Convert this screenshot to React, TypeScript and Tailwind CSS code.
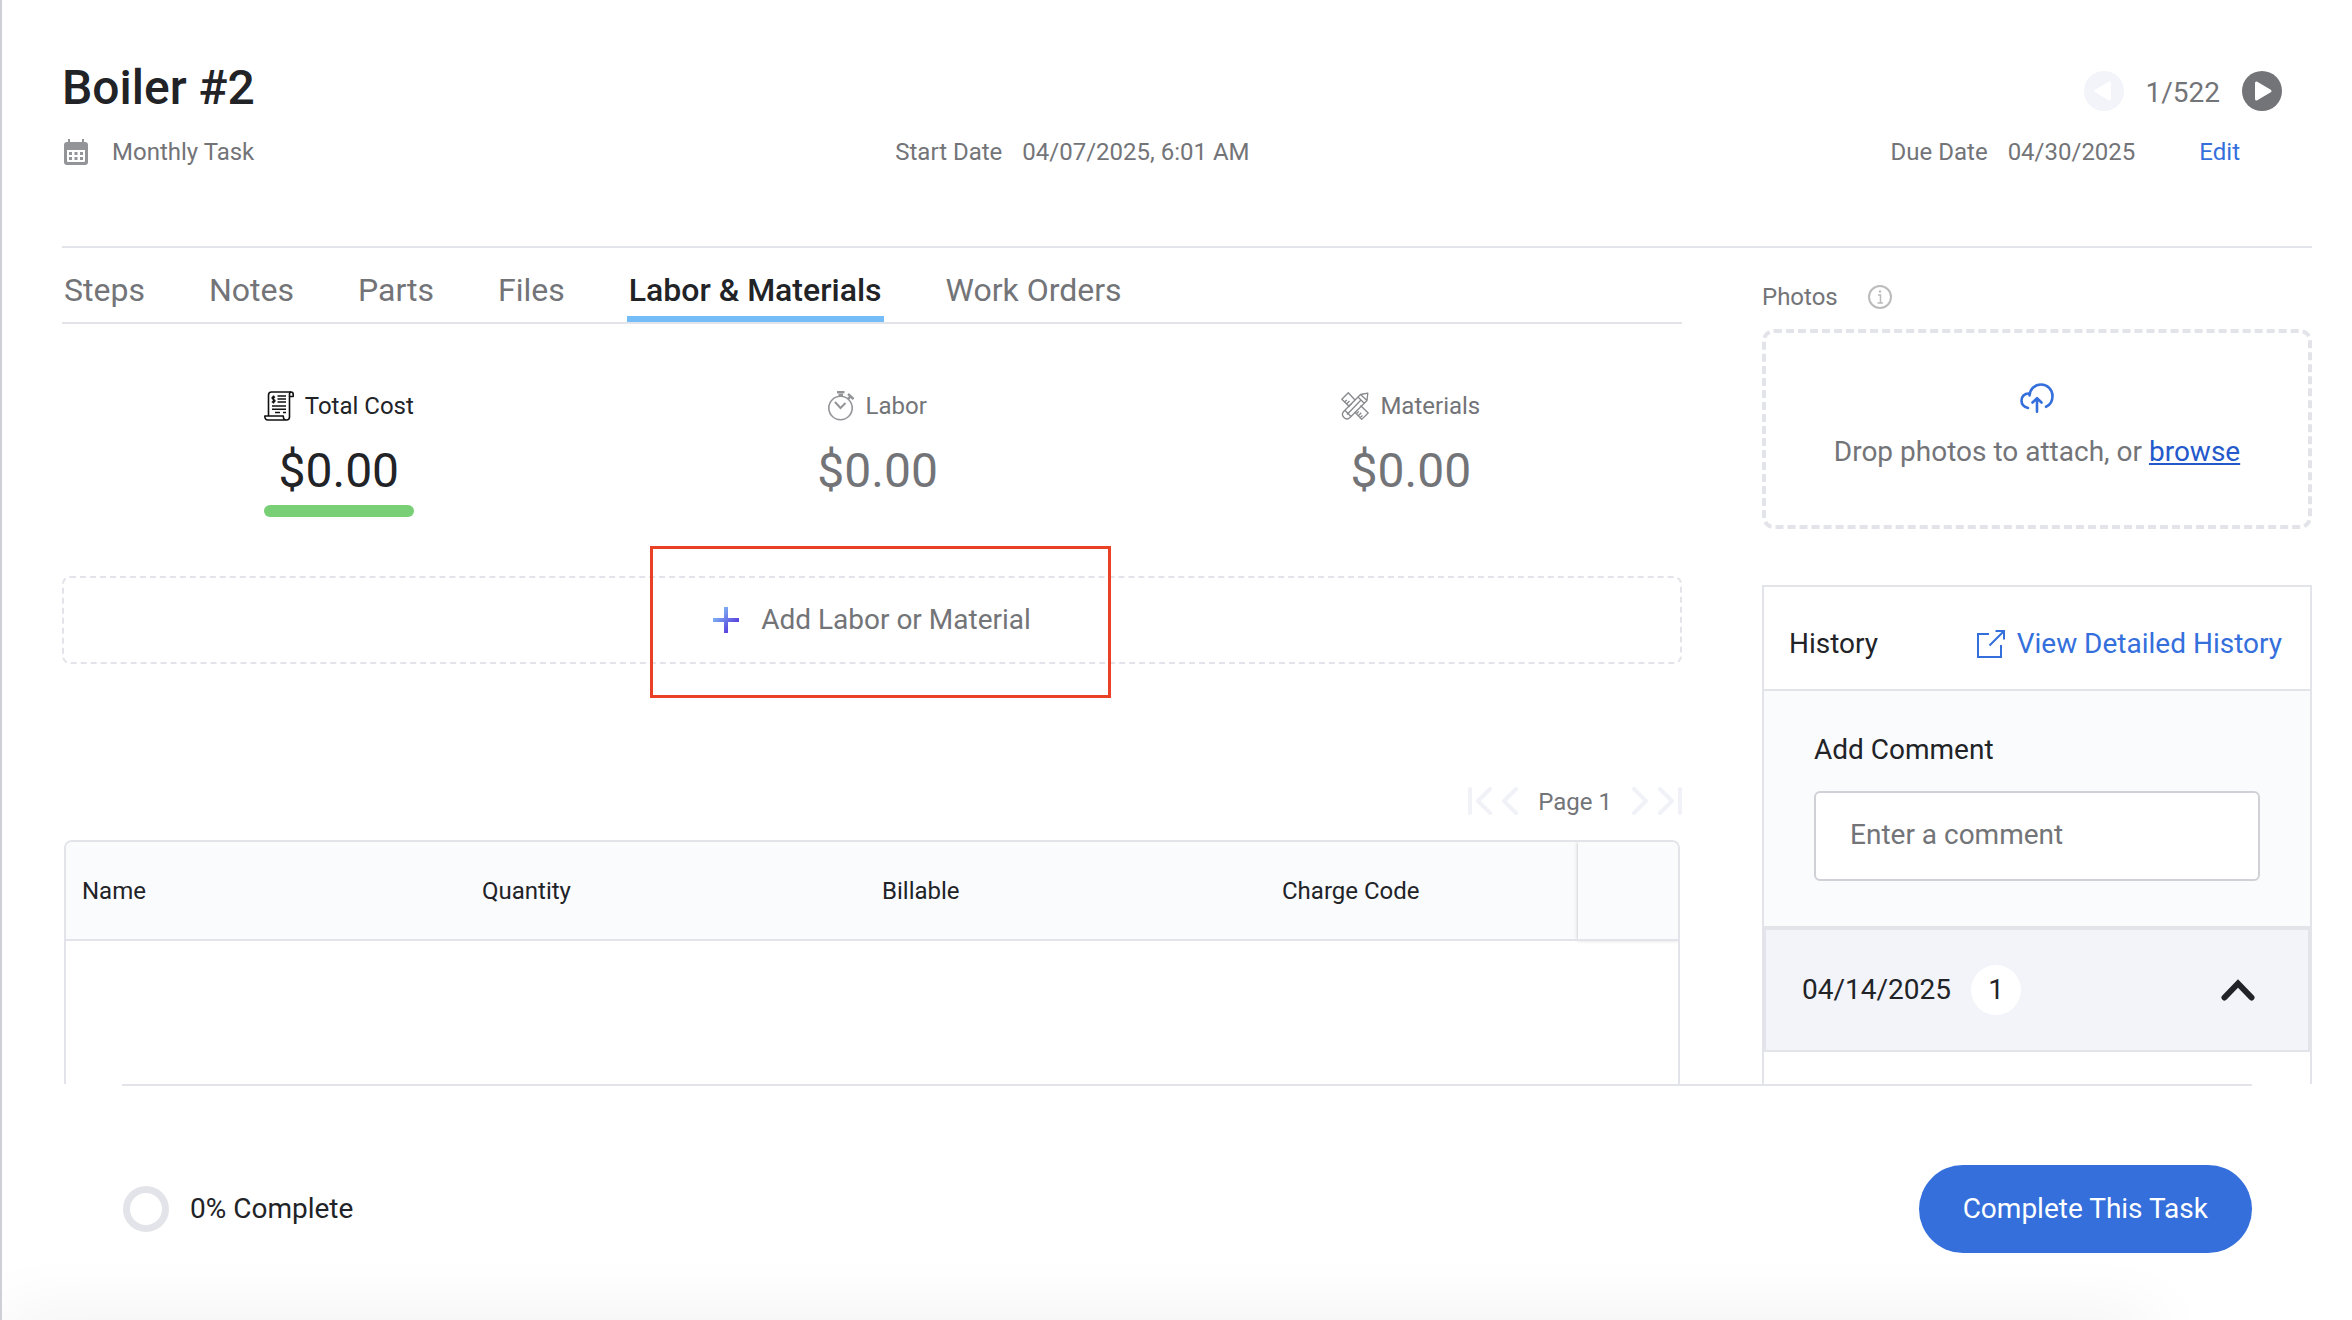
import React, { useState } from 'react'

const TABS = ['Steps', 'Notes', 'Parts', 'Files', 'Labor & Materials', 'Work Orders']

function CalendarIcon() {
  return (
    <svg className="h-[26px] w-6" viewBox="0 0 24 26" fill="none">
      <path
        fillRule="evenodd"
        fill="#939498"
        d="M4 0h2v3h12V0h2v3h1a3 3 0 0 1 3 3v17a3 3 0 0 1-3 3H3a3 3 0 0 1-3-3V6a3 3 0 0 1 3-3h1zM3 11v11a1 1 0 0 0 1 1h16a1 1 0 0 0 1-1V11z"
      />
      <path
        fill="#939498"
        d="M5 13h3v3H5zM10.500 13h3v3h-3zM16 13h3v3h-3zM5 18h3v3H5zM10.500 18h3v3h-3zM16 18h3v3h-3z"
      />
    </svg>
  )
}

function PlayIcon({ flip, color }: { flip?: boolean; color: string }) {
  return (
    <svg className="size-10" viewBox="0 0 40 40">
      <circle cx="20" cy="20" r="20" fill={color} />
      <path
        d={flip ? 'M25.500 12v16L12 20z' : 'M14.500 12v16L28 20z'}
        fill="#fff"
        stroke="#fff"
        strokeWidth="3"
        strokeLinejoin="round"
      />
    </svg>
  )
}

function ReceiptIcon() {
  return (
    <svg className="size-[30px]" viewBox="0 0 30 30" fill="none" stroke="#111" strokeWidth="1.600" strokeLinejoin="round">
      <path d="M4.500 24.500V4C4.500 2 5.500 1 7.500 1H27c1.500 0 2.200 1.200 2.200 2.500V5.500h-3.700V26c0 2-1 3-3 3H4c-2 0-3.200-1.500-3.200-4h18.500c0 2.500 1 4 3 4" />
      <path d="M25.500 5.500V3.500C25.500 2 26 1 27 1" />
      <path d="M13.500 5h8.500M13.500 8h8.500M13.500 11h8.500M8 15h14M8 18.300h14M11 21.500h5M19 21.500h3" />
      <path strokeWidth="1.400" d="M11 6.300C9.200 5.300 8 6 8.100 7.200c.2 1.400 2.900 1 2.900 2.600 0 1.400-1.800 1.700-3.200.8M9.500 4.500v8" />
    </svg>
  )
}

function StopwatchIcon() {
  return (
    <svg className="h-[30px] w-[26px]" viewBox="0 0 26 30" fill="none" stroke="#939498" strokeWidth="1.600">
      <circle cx="12.500" cy="17" r="11.700" />
      <path d="M9 1.200h7.500" strokeWidth="2.400" />
      <path d="M10.500 3.800h4.500" strokeWidth="2.400" />
      <path d="M20 3l5.500 5" strokeWidth="2.400" />
      <path d="M23 5l-3 3" strokeWidth="2.400" />
      <path d="M7 11l5.500 6 5-5" strokeWidth="2" />
    </svg>
  )
}

function RulerPencilIcon() {
  return (
    <svg className="size-7" viewBox="0 0 28 28" fill="none" stroke="#87888c" strokeWidth="1.300" strokeLinejoin="round">
      <path d="M8.500 14.800L.8 7.300 7.300.8l6.900 7.400M19.500 13.500l7.700 7.500-6.500 6.400-7-7.400" />
      <path d="M3.500 10l2.300-2M5.500 12l3-3M8 14l2.300-2M15.500 21.500l2.300-2M17.300 23.700l3-3M19.200 25.500l2.300-2" />
      <path d="M19.500 2.500L26.800 1.200l-.8 7.300L9 25.500c-4 4-10-2-6.300-6zM19.500 2.500l6.500 6M17 5l6 6M20 8L6 22.500M3.800 18.300l6 6" />
    </svg>
  )
}

function PlusIcon() {
  return (
    <svg className="size-[26px]" viewBox="0 0 26 26">
      <defs>
        <linearGradient id="plus" x1="0" y1="0" x2="26" y2="26" gradientUnits="userSpaceOnUse">
          <stop offset=".2" stopColor="#7fb6f2" />
          <stop offset=".75" stopColor="#5b45e0" />
        </linearGradient>
      </defs>
      <path d="M11 0h4v11h11v4H15v11h-4V15H0v-4h11z" fill="url(#plus)" />
    </svg>
  )
}

function CloudIcon() {
  return (
    <svg className="h-[30px] w-[34px]" viewBox="0 0 34 30" fill="none" stroke="#346fdc" strokeWidth="2.600" strokeLinecap="round" strokeLinejoin="round">
      <path d="M8 25C4 24 1.500 21.500 1.500 17.500c0-4 3-7 7-7h1.500" />
      <path d="M9.500 12.500C10 6 15 1.500 21 1.500c6.500 0 11.500 5 11.500 11.500 0 5-2.500 9-6.500 10.800" />
      <path d="M17 28.700V16M12.500 19.500L17 15.200l4.500 4.300" />
    </svg>
  )
}

function ExternalIcon() {
  return (
    <svg className="size-7" viewBox="0 0 28 28" fill="none" stroke="#346fdc" strokeWidth="2">
      <path d="M12 4H1v23h23V15" />
      <path d="M12.500 15.500L26.500 1.500M18.500 1H27v8.500" />
    </svg>
  )
}

function PagerIcon({ d, wide }: { d: string; wide?: boolean }) {
  return (
    <svg
      className={wide ? 'h-7 w-6' : 'h-7 w-4'}
      viewBox={wide ? '0 0 24 28' : '0 0 16 28'}
      fill="none"
      stroke="#f1f2f7"
      strokeWidth="4"
      strokeLinecap="round"
      strokeLinejoin="round"
    >
      <path d={d} />
    </svg>
  )
}

interface StatProps {
  icon: React.ReactNode
  label: string
  active?: boolean
}

function Stat({ icon, label, active }: StatProps) {
  return (
    <button className={active ? 'flex flex-col items-center text-[#212327]' : 'flex flex-col items-center text-[#737478]'}>
      <span className="flex h-8 items-center gap-[11px] text-2xl">
        {icon}
        {label}
      </span>
      <span className="mt-[17px] text-5xl leading-16">$0.00</span>
      {active && <span className="mt-0.5 h-3 w-full rounded-full bg-[#79cf76]" />}
    </button>
  )
}

export default function App() {
  const [tab, setTab] = useState('Labor & Materials')
  const [comment, setComment] = useState('')

  return (
    <div className="relative flex h-screen flex-col overflow-hidden border-l-2 border-[#cfcfd7] bg-white font-['Roboto',sans-serif] text-[#212327]">
      {/* Header */}
      <header className="mr-10 ml-[60px] border-b-2 border-[#e3e4e9] pt-15 pb-[78px]">
        <div className="flex h-14 items-center justify-between">
          <h1 className="text-5xl font-medium">Boiler #2</h1>
          <div className="mt-1.5 mr-[30px] flex items-center gap-[22px] text-[#737478]">
            <button aria-label="Previous task" disabled>
              <PlayIcon flip color="#f3f4f9" />
            </button>
            <span className="pt-1 text-[28px] leading-10">1/522</span>
            <button aria-label="Next task">
              <PlayIcon color="#737478" />
            </button>
          </div>
        </div>
        <div className="mt-5 flex h-8 items-center justify-between text-2xl text-[#737478]">
          <div className="flex items-center gap-6 pl-0.5">
            <CalendarIcon />
            Monthly Task
          </div>
          <div className="flex gap-5">
            <span>Start Date</span>
            <span>04/07/2025, 6:01 AM</span>
          </div>
          <div className="flex gap-5 pr-[72px]">
            <span>Due Date</span>
            <span>04/30/2025</span>
            <a href="#edit" className="ml-11 text-[#346fdc]">
              Edit
            </a>
          </div>
        </div>
      </header>

      <div className="mr-10 ml-[60px] grid min-h-0 flex-1 grid-cols-[minmax(0,1fr)_550px] gap-20">
        {/* Left column */}
        <main className="flex min-h-0 flex-col">
          <nav className="flex gap-[60px] border-b-2 border-[#e3e4e9]">
            {TABS.map((name) => (
              <button
                key={name}
                onClick={() => setTab(name)}
                className={
                  name === tab
                    ? 'border-b-6 border-[#74bdf9] px-0.5 pt-[22px] pb-1.5 text-[32px] leading-10 font-medium'
                    : 'border-b-6 border-transparent px-0.5 pt-[22px] pb-1.5 text-[32px] leading-10 text-[#737478]'
                }
              >
                {name}
              </button>
            ))}
          </nav>

          <div className="mt-16 flex h-32 items-start justify-around pt-0.5">
            <Stat icon={<ReceiptIcon />} label="Total Cost" active />
            <Stat icon={<StopwatchIcon />} label="Labor" />
            <Stat icon={<RulerPencilIcon />} label="Materials" />
          </div>

          <div className="relative mt-15">
            <button className="flex h-22 w-full items-center justify-center gap-[22px] rounded-lg border-2 border-dashed border-[#e3e4e9] text-[28px] text-[#737478]">
              <PlusIcon />
              Add Labor or Material
            </button>
            {/* callout over the add button */}
            <div className="pointer-events-none absolute -top-[30px] -bottom-[34px] left-1/2 w-[461px] -translate-x-[222px] border-3 border-[#ea4026]" />
          </div>

          <div className="mt-[120px] flex items-center justify-end text-2xl text-[#737478]">
            <button aria-label="First page" disabled>
              <PagerIcon wide d="M2 2v24M22 2L10 14l12 12" />
            </button>
            <button aria-label="Previous page" disabled className="ml-2.5">
              <PagerIcon d="M14 2L2 14l12 12" />
            </button>
            <span className="mx-5 pt-0.5">Page 1</span>
            <button aria-label="Next page" disabled>
              <PagerIcon d="M2 2l12 12L2 26" />
            </button>
            <button aria-label="Last page" disabled className="ml-2.5">
              <PagerIcon wide d="M2 2l12 12L2 26M22 2v24" />
            </button>
          </div>

          <div className="mx-0.5 mt-[22px] flex-1 overflow-hidden rounded-t-lg border-2 border-b-0 border-[#e3e4e9]">
            <table className="w-full table-fixed text-left text-2xl">
              <thead>
                <tr className="h-[98px] border-b-2 border-[#e3e4e9] bg-[#fafbfd]">
                  <th className="w-[400px] px-4 font-normal">Name</th>
                  <th className="w-[400px] px-4 font-normal">Quantity</th>
                  <th className="w-[400px] px-4 font-normal">Billable</th>
                  <th className="px-4 font-normal">Charge Code</th>
                  <th aria-label="Actions" className="w-[100px] shadow-[0_0_4px_rgba(0,0,0,0.25)]" />
                </tr>
              </thead>
              <tbody />
            </table>
          </div>
        </main>

        {/* Right column */}
        <aside className="flex min-h-0 flex-col">
          <div className="mt-[31px] flex h-9 items-center gap-[30px] text-2xl text-[#737478]">
            Photos
            <svg className="size-6" viewBox="0 0 24 24" fill="none" stroke="#bbb" strokeWidth="2">
              <circle cx="12" cy="12" r="11" />
              <path d="M10 10h2.500v8M9.500 18h5.500" strokeWidth="1.500" />
              <circle cx="12" cy="6.500" r="1.200" fill="#bbb" stroke="none" />
            </svg>
          </div>
          <div className="mt-[14px] flex h-50 flex-col items-center rounded-xl border-4 border-dashed border-[#e3e4e9] pt-[50px] text-[28px] text-[#737478]">
            <CloudIcon />
            <p className="mt-[18px] leading-[42px]">
              Drop photos to attach, or{' '}
              <a href="#browse" className="text-[#2459cb] underline">
                browse
              </a>
            </p>
          </div>

          <section className="mt-14 flex flex-1 flex-col border-2 border-b-0 border-[#e3e4e9] text-[28px]">
            <div className="flex h-[104px] items-center justify-between border-b-2 border-[#e3e4e9] pt-3 pr-7 pl-[25px]">
              <h2>History</h2>
              <a href="#history" className="flex items-center gap-3 text-[#346fdc]">
                <ExternalIcon />
                View Detailed History
              </a>
            </div>
            <div className="bg-[#fafbfd] px-[50px] pt-[38px] pb-[45px]">
              <label htmlFor="comment" className="block leading-[42px]">
                Add Comment
              </label>
              <input
                id="comment"
                value={comment}
                onChange={(e) => setComment(e.target.value)}
                placeholder="Enter a comment"
                className="mt-5 block h-[90px] w-full rounded-md border-2 border-[#d0d1d6] bg-white px-[34px] pb-1 placeholder:text-[#737478]"
              />
            </div>
            <button className="flex h-[126px] items-center border-2 border-t-4 border-[#e3e4e9] bg-[#f3f4f9] pr-[53px] pl-9">
              04/14/2025
              <span className="ml-5 flex size-[50px] items-center justify-center rounded-full bg-white">1</span>
              <svg className="ml-auto h-[22px] w-[34px]" viewBox="0 0 34 22" fill="none" stroke="#212327" strokeWidth="6" strokeLinecap="round">
                <path d="M3.500 18.500L17 4.500l13.500 14" />
              </svg>
            </button>
          </section>
        </aside>
      </div>

      {/* Footer */}
      <footer className="mr-25 ml-30 flex h-[236px] items-center justify-between border-t-2 border-[#e3e4e9] pt-3 text-[28px]">
        <div className="flex items-center gap-[21px] pl-px">
          <span className="size-[46px] rounded-full border-7 border-[#e3e4e9]" />
          0% Complete
        </div>
        <button className="h-22 rounded-full bg-[#346fdc] px-11 text-white">Complete This Task</button>
      </footer>

      <div className="pointer-events-none absolute top-full right-50 left-0 h-10 shadow-[0_0_70px_rgba(0,0,0,0.08)]" />
    </div>
  )
}
